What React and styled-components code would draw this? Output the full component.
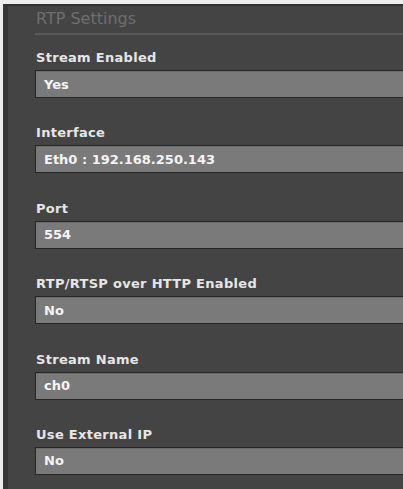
import styled, { createGlobalStyle } from "styled-components";

const GlobalStyle = createGlobalStyle`
  html, body {
    margin: 0;
    padding: 0;
    height: 100%;
    background-color: #ededed;
  }
  #root {
    height: 100%;
  }
`;

const Panel = styled.div`
  box-sizing: border-box;
  height: calc(100% - 4px);
  margin: 4px 0 0 3px;
  padding: 3px 0 0 27px;
  background-color: #444444;
  border-top: 2px solid #303030;
  border-left: 5px solid #373737;
  overflow: hidden;
  font-family: "DejaVu Sans", Verdana, sans-serif;
`;

const Title = styled.h2`
  margin: 0 0 14px 0;
  padding: 0 0 4px 1px;
  font-size: 16px;
  font-weight: normal;
  line-height: 20px;
  color: #6e6e6e;
  border-bottom: 2px solid #5a5a5a;
`;

const Field = styled.div`
  display: flex;
  flex-direction: column;
  gap: 4px;
  margin-bottom: 26.4px;
`;

const Label = styled.label`
  padding-left: 1px;
  font-size: 13px;
  font-weight: bold;
  letter-spacing: 0.3px;
  line-height: 17px;
  color: #e6e6e6;
`;

const Select = styled.div`
  box-sizing: border-box;
  height: 28px;
  margin-right: -4px;
  padding-left: 8px;
  display: flex;
  align-items: center;
  background-color: #7a7a7a;
  border: 1px solid #262626;
  box-shadow: inset 0 1px 0 #6c6c6c;
  font-size: 13px;
  font-weight: bold;
  color: #f4f4f4;
`;

const fields = [
  { label: "Stream Enabled", value: "Yes" },
  { label: "Interface", value: "Eth0 : 192.168.250.143" },
  { label: "Port", value: "554" },
  { label: "RTP/RTSP over HTTP Enabled", value: "No" },
  { label: "Stream Name", value: "ch0" },
  { label: "Use External IP", value: "No" },
];

function App() {
  return (
    <>
      <GlobalStyle />
      <Panel>
        <Title>RTP Settings</Title>
        {fields.map((field) => (
          <Field key={field.label}>
            <Label>{field.label}</Label>
            <Select role="combobox">{field.value}</Select>
          </Field>
        ))}
      </Panel>
    </>
  );
}

export default App;
